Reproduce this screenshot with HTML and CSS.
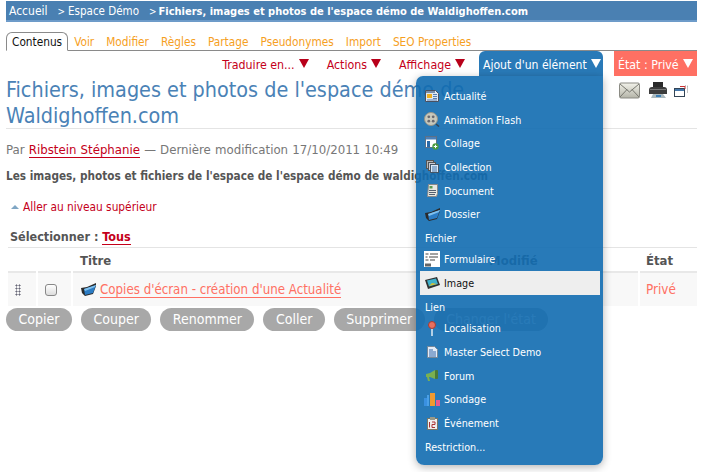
FILE: index.html
```html
<!DOCTYPE html>
<html lang="fr">
<head>
<meta charset="utf-8">
<title>Fichiers, images et photos</title>
<link rel="stylesheet" href="styles.css">
</head>
<body>
<div class="page">
  <nav class="crumbs"><span>Accueil</span><span class="sep">&gt;</span><span>Espace Démo</span><span class="sep">&gt;</span><b>Fichiers, images et photos de l'espace démo de Waldighoffen.com</b></nav>
  <div class="tabs">
    <a class="tab active">Contenus</a><a class="tab">Voir</a><a class="tab">Modifier</a><a class="tab">Règles</a><a class="tab">Partage</a><a class="tab">Pseudonymes</a><a class="tab">Import</a><a class="tab">SEO Properties</a>
  </div>
  <div class="actions">
    <a class="act">Traduire en... <i class="tri"></i></a>
    <a class="act">Actions <i class="tri"></i></a>
    <a class="act">Affichage <i class="tri"></i></a>
    <a class="act add">Ajout d'un élément <i class="tri white"></i></a>
    <a class="act state">État : Privé <i class="tri white"></i></a>
  </div>
  <div class="head">
    <h1>Fichiers, images et photos de l'espace démo de Waldighoffen.com</h1>
    <div class="tools">
      <svg width="21" height="17" viewBox="0 0 21 17"><defs><linearGradient id="env" x1="0" y1="0" x2="0" y2="1"><stop offset="0" stop-color="#f2f2ea"/><stop offset="1" stop-color="#b4b4a8"/></linearGradient></defs><rect x=".5" y="1" width="20" height="15" rx="1.500" fill="url(#env)" stroke="#8b8b84"/><path d="M1 2l9.500 8L20 2M1 15l7-7.500M20 15l-7-7.500" fill="none" stroke="#77776f"/></svg>
      <svg width="20" height="17" viewBox="0 0 20 17"><rect x="5" y="0" width="10" height="6" fill="#2a2a2a"/><path d="M1 8q0-3 3-3h12q3 0 3 3v4H1z" fill="#3c3c3c"/><rect x="2" y="7" width="16" height="1" fill="#777"/><path d="M5 12h10l3 4H3z" fill="#a9b8bd"/><rect x="8" y="13" width="5" height="2" fill="#3d7fb5"/></svg>
      <svg width="14" height="12" viewBox="0 0 14 12"><rect x=".5" y="3.500" width="10" height="8" fill="#fff" stroke="#345"/><rect x="1" y="4" width="9" height="2" fill="#4477aa"/><path d="M11 1h2.500v7" fill="none" stroke="#888" stroke-dasharray="1 1"/><path d="M6 1.500h5V4" fill="none" stroke="#cc3333"/></svg>
    </div>
  </div>
  <p class="by">Par <a class="link">Ribstein Stéphanie</a> — Dernière modification 17/10/2011 10:49</p>
  <p class="desc">Les images, photos et fichiers de l'espace de l'espace démo de waldighoffen.com</p>
  <p class="up"><i class="uptri"></i><a>Aller au niveau supérieur</a></p>
  <p class="select">Sélectionner : <a class="link">Tous</a></p>
  <div class="grid">
    <div class="th"></div><div class="th"></div><div class="th">Titre</div><div class="th">Modifié</div><div class="th">État</div>
    <div class="td handle"><i></i></div>
    <div class="td check"><span class="box"></span></div>
    <div class="td title">
      <svg width="15" height="13" viewBox="0 0 15 13"><path d="M0 5l6-1 9-4v3l-3 8-8 2-3-3z" fill="#2b2b2b"/><path d="M3 6l12-4-3 8-8 2z" fill="#2b7cc4"/><path d="M3 6l12-4-1 2-10 4z" fill="#7fc0ee"/></svg>
      <a class="item">Copies d'écran - création d'une Actualité</a>
    </div>
    <div class="td"></div>
    <div class="td private">Privé</div>
  </div>
  <div class="buttons">
    <span class="btn">Copier</span><span class="btn">Couper</span><span class="btn">Renommer</span><span class="btn">Coller</span><span class="btn">Supprimer</span><span class="btn">Changer l'état</span>
  </div>
</div>

<div class="menu">
  <a class="mi"><span class="ico"><svg width="14" height="12" viewBox="0 0 14 12"><path d="M.5.500h10l3 3v8H.500z" fill="#dfe8f2" stroke="#4a5060"/><rect x="2" y="4" width="5" height="4" fill="#f0b020"/><path d="M8 4.500h4M8 6.500h4M8 8.500h4M2 10h10" stroke="#5a7fb0"/><path d="M1 2h9" stroke="#7a8ea8" stroke-width="2"/></svg></span>Actualité</a>
  <a class="mi"><span class="ico"><svg width="16" height="15" viewBox="0 0 16 15"><circle cx="7" cy="7" r="6.500" fill="#c9c9bc" stroke="#94948a"/><circle cx="4.800" cy="4.800" r="1.400" fill="#6a6a70"/><circle cx="9.200" cy="4.800" r="1.400" fill="#6a6a70"/><circle cx="4.800" cy="9.200" r="1.400" fill="#6a6a70"/><circle cx="9.200" cy="9.200" r="1.400" fill="#6a6a70"/><path d="M12 12l3 2.500" stroke="#334455" stroke-width="1.500"/></svg></span>Animation Flash</a>
  <a class="mi"><span class="ico"><svg width="14" height="14" viewBox="0 0 14 14"><rect x=".5" y=".5" width="11" height="11" fill="#fff" stroke="#5a7088"/><rect x="1" y="1" width="10" height="2.500" fill="#4a80b8"/><rect x="2" y="5" width="3" height="6" fill="#2a6aa8"/><circle cx="10.500" cy="10.500" r="3.200" fill="#4a9a40"/><path d="M8.800 10.500h3.400M10.500 8.800v3.400" stroke="#fff"/></svg></span>Collage</a>
  <a class="mi"><span class="ico"><svg width="13" height="13" viewBox="0 0 13 13"><rect x=".5" y=".5" width="7" height="8" fill="#b4b4b4" stroke="#555"/><rect x="2.500" y="2.500" width="7" height="8" fill="#ccccd4" stroke="#555"/><rect x="4.500" y="4.500" width="8" height="8" fill="#dce8f5" stroke="#456"/><path d="M6 7h5M6 9h5M6 11h5" stroke="#4477aa"/></svg></span>Collection</a>
  <a class="mi"><span class="ico"><svg width="11" height="13" viewBox="0 0 11 13"><path d="M1.500.500h9v9l-1 3H.500z" fill="#e8e8e0" stroke="#8a8a8a"/><rect x="2.500" y="2" width="3" height="2.500" fill="#5a9a50"/><path d="M2 6.500h7M2 8.500h7M2 10.500h6" stroke="#556070" stroke-width="1.200"/></svg></span>Document</a>
  <a class="mi"><span class="ico"><svg width="15" height="13" viewBox="0 0 15 13"><path d="M0 5l6-1 9-4v3l-3 8-8 2-3-3z" fill="#2b2b2b"/><path d="M3 6l12-4-3 8-8 2z" fill="#2b7cc4"/><path d="M3 6l12-4-1 2-10 4z" fill="#7fc0ee"/></svg></span>Dossier</a>
  <div class="mh">Fichier</div>
  <a class="mi"><span class="ico"><svg width="16" height="16" viewBox="0 0 16 16"><rect width="16" height="16" fill="#fff"/><path d="M1.500 3h3M6 3h8M1.500 6h2M5 6h9M1.500 9h3M6 9h5" stroke="#444"/><rect x="1" y="12.500" width="6" height="3" fill="#666"/></svg></span>Formulaire</a>
  <a class="mi on"><span class="ico"><svg width="15" height="12" viewBox="0 0 15 12"><path d="M0 3l12-3 3 8-12 4z" fill="#303030"/><path d="M2 3.500l9-2 2 5.500-9 2.500z" fill="#3fb0cc"/><path d="M4 9l3-3 5 1z" fill="#d8c030"/></svg></span>Image</a>
  <div class="mh wide">Lien</div>
  <a class="mi"><span class="ico"><svg width="8" height="15" viewBox="0 0 8 15"><path d="M4 7v8" stroke="#fff" stroke-width="1.300"/><circle cx="4" cy="4" r="3.500" fill="#e8705f" stroke="#a83a30"/></svg></span>Localisation</a>
  <a class="mi"><span class="ico"><svg width="11" height="12" viewBox="0 0 11 12"><path d="M.5.500h7l3 3v8H.500z" fill="#e2ecf8" stroke="#778899"/><path d="M2 4h4M2 6h7M2 8h7M2 10h7" stroke="#3366aa"/></svg></span>Master Select Demo</a>
  <a class="mi"><span class="ico"><svg width="13" height="12" viewBox="0 0 13 12"><path d="M0 4l4-1 5-3v9L4 7H3l1 4H2L1 7H0z" fill="#7ab050"/><rect x="9" y="0" width="3" height="9" rx="1" fill="#4a7a38"/></svg></span>Forum</a>
  <a class="mi"><span class="ico"><svg width="16" height="13" viewBox="0 0 16 13"><rect y="5" width="3" height="8" fill="#3a90e0"/><rect x="3" y="2" width="2" height="11" fill="#4aa0e8"/><rect x="6" width="5" height="13" fill="#f09a30"/><rect x="12" y="7" width="4" height="6" fill="#e85a90"/></svg></span>Sondage</a>
  <a class="mi"><span class="ico"><svg width="11" height="13" viewBox="0 0 11 13"><rect x=".5" y="1.500" width="10" height="11" fill="#eee" stroke="#777766"/><rect x="3" y="0" width="5" height="3" fill="#999988"/><path d="M2.500 5v5.500M5 5h3v2.500H5v3h3" fill="none" stroke="#aa3333"/></svg></span>Événement</a>
  <div class="mh">Restriction...</div>
</div>
</body>
</html>
```
FILE: styles.css
```css
* { box-sizing: border-box; }
html, body { margin: 0; height: 472px; overflow: hidden; background: #fff; }
body { position: relative; font-family: "DejaVu Sans Condensed", "DejaVu Sans", sans-serif; font-stretch: condensed; font-size: 12px; color: #555; }
a { cursor: pointer; }
p { margin: 0; }

.page { width: 691px; margin-left: 6px; padding-top: 1px; }

.crumbs { display: flex; align-items: center; height: 21px; padding: 1px 0 0 3px; background: #4a80b2; border-bottom: 2px solid #6d9bc9; color: #fff; font-size: 12px; white-space: nowrap; }
.crumbs span:nth-child(3) { font-size: 11.500px; }
.crumbs .sep { margin: 0 3px 0 10px; font-size: 10px; }
.crumbs .sep:nth-child(4) { margin-right: 2px; }
.crumbs b { font-weight: 700; font-size: 11px; }

.tabs { display: flex; align-items: flex-end; height: 29px; border-bottom: 1px solid #8a8a8a; gap: 12px; font-size: 11.750px; color: #f6a01e; }
.tab { line-height: 15px; }
.tab.active { color: #111; height: 19px; margin-bottom: -1px; padding: 2px 5px 0; background: #fff; border: 1px solid #8a8a8a; border-bottom: 1px solid #fff; border-radius: 6px 6px 0 0; margin-right: -6px; }

.actions { display: flex; justify-content: flex-end; align-items: stretch; height: 25px; }
.act { display: flex; align-items: center; gap: 4px; padding-top: 2px; color: #c4001a; font-size: 12.300px; margin-right: 19px; white-space: nowrap; }
.act.add { background: #297ab8; color: #fff; padding: 2px 4px 0; margin: 0 11px 0 -4px; width: 124px; border-radius: 6px 6px 0 0; font-size: 12.100px; }
.act.state { background: #ff7063; color: #fff; padding: 2px 4px 0; margin-right: 0; width: 83px; }
.tri { display: inline-block; flex: none; width: 0; height: 0; margin: -2px -1px 0 0; border-left: 5px solid transparent; border-right: 5px solid transparent; border-top: 9px solid #b8001a; }
.tri.white { border-top-color: #fff; }

.head { position: relative; border-bottom: 1px solid #e4e4e4; height: 53px; }
h1 { margin: 0; width: 575px; padding-top: 1px; font-size: 21.400px; line-height: 26px; font-weight: 400; color: #4a82b6; }
.tools { position: absolute; right: 9px; top: 6px; display: flex; align-items: center; gap: 8px; }
.tools svg:last-child { margin-left: -2px; }

.by { margin-top: 13px; line-height: 16px; font-size: 13.100px; word-spacing: .4px; color: #777; }
.link { color: #c4001a; border-bottom: 1px solid #c4001a; }
.desc { margin-top: 10px; line-height: 16px; font-weight: 700; color: #555; font-size: 11.700px; white-space: nowrap; }
.up { margin-top: 15px; padding-left: 5px; line-height: 16px; color: #c4001a; font-size: 11.800px; display: flex; align-items: center; gap: 4px; }
.uptri { width: 0; height: 0; border-left: 4px solid transparent; border-right: 4px solid transparent; border-bottom: 4px solid #7fa6c4; }
.select { margin-top: 14px; padding-left: 4px; line-height: 16px; font-weight: 700; font-size: 12.500px; color: #555; }

.grid { display: grid; grid-template-columns: 28px 33px 1fr 150px 57px; column-gap: 2px; margin: 2px 0 0 2px; border-top: 1px solid #e4e4e4; }
.th { height: 25px; line-height: 26px; border-bottom: 2px solid #e8e8e8; font-weight: 700; font-size: 13px; color: #555; padding-left: 6px; white-space: nowrap; }
.grid .th:nth-child(3) { padding-left: 7px; }
.grid .th:nth-child(4) { padding-left: 1px; }
.td { height: 33px; background: #f8f8f8; display: flex; align-items: center; }
.handle { padding-left: 7px; }
.handle i { width: 6px; height: 12px; background-image: radial-gradient(#667 45%, transparent 50%); background-size: 3px 3px; }
.check { padding-left: 7px; }
.box { width: 12px; height: 12px; border: 1px solid #888; border-radius: 3px; background: linear-gradient(#fff, #ddd); }
.title { padding-left: 8px; gap: 4px; }
.item { color: #ff7063; border-bottom: 1px solid #ff7063; font-size: 13.200px; line-height: 15px; }
.private { color: #ff7063; font-size: 13.400px; padding-left: 6px; }

.buttons { display: flex; gap: 9px; margin-top: 2px; }
.btn { height: 23px; line-height: 22px; padding: 0 12.500px; border-radius: 12px; background: #a8a8a8; color: #fff; font-size: 14px; white-space: nowrap; }

.menu { position: absolute; left: 416px; top: 76px; width: 187px; height: 389px; padding: 8px 3px 0 4px; background: rgba(17, 107, 176, .9); border-radius: 7px 0 8px 8px; box-shadow: 0 2px 9px rgba(0, 0, 0, .3); color: #fff; font-size: 10.700px; }
.mi { display: flex; align-items: center; height: 23.700px; padding-top: 1px; white-space: nowrap; }
.ico { display: flex; justify-content: center; align-items: center; width: 24px; margin-top: -1px; padding-left: 2px; padding-right: 2px; }
.mi.on { background: #eee; color: #111; }
.mh { height: 21px; line-height: 26px; padding-left: 5px; }
.mh.wide { height: 22px; }
```
